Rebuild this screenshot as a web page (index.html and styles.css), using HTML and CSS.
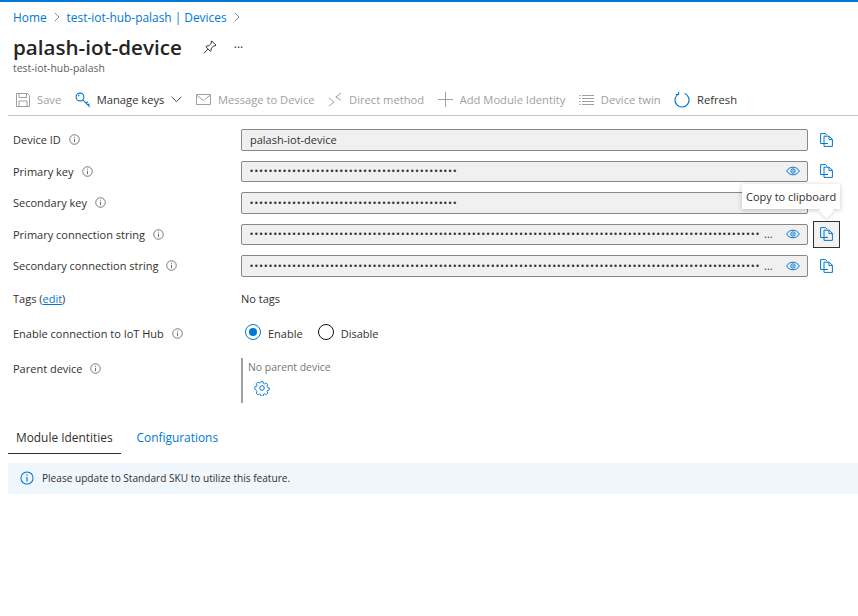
FILE: index.html
```html
<!DOCTYPE html>
<html lang="en">

<head>
    <meta charset="UTF-8">
    <meta name="viewport" content="width=device-width, initial-scale=1.0">
    <title>palash-iot-device</title>
    <link rel="stylesheet" href="styles.css">
</head>

<body>
    <svg class="icon-defs" width="0" height="0">
        <symbol id="info" viewBox="0 0 12 12">
            <circle cx="6" cy="6" r="5.2" fill="none" stroke="currentColor" stroke-width="0.9"/>
            <path d="M6 5.2V9M6 3v1" fill="none" stroke="currentColor" stroke-width="1"/>
        </symbol>
        <symbol id="copy" viewBox="0 0 13 14">
            <path d="M8 10.500H.6V.6h5l1.500 1.700" fill="none" stroke="currentColor" stroke-width="1"/>
            <path d="M4 3.200h5.300l3.100 3.100v7.100H4zM9 3.200v3.400h3.400" fill="none" stroke="currentColor" stroke-width="1"/>
        </symbol>
        <symbol id="eye" viewBox="0 0 14 10">
            <path d="M.6 5C2.200 2.500 4.400 1.200 7 1.200S11.800 2.500 13.400 5C11.800 7.500 9.600 8.800 7 8.800S2.200 7.500.6 5z" fill="none" stroke="currentColor" stroke-width="1"/>
            <circle cx="7" cy="5" r="2.200" fill="none" stroke="currentColor" stroke-width="1"/>
            <circle cx="7" cy="5" r="0.800" fill="currentColor"/>
        </symbol>
    </svg>

    <nav class="breadcrumb">
        <a href="#">Home</a>
        <svg class="crumb-sep" width="6" height="10" viewBox="0 0 6 10"><path d="M.8.800 5 5 .8 9.200" fill="none" stroke="currentColor"/></svg>
        <a href="#">test-iot-hub-palash | Devices</a>
        <svg class="crumb-sep" width="6" height="10" viewBox="0 0 6 10"><path d="M.8.800 5 5 .8 9.200" fill="none" stroke="currentColor"/></svg>
    </nav>

    <header class="page-title">
        <h1>palash-iot-device</h1>
        <svg class="pin" width="14" height="14" viewBox="0 0 14 14">
            <path d="M8.800 1 13 5.200 11.900 6 10.900 5.800 8.200 8.300 8.200 10.500 7.300 11.200 2.900 6.800 3.600 5.900 5.800 5.900 8.300 3.200 8.100 2z" fill="none" stroke="#333" stroke-width="1"/>
            <path d="M5 9.100.8 13.300" fill="none" stroke="#333" stroke-width="1"/>
        </svg>
        <span class="more">···</span>
    </header>
    <p class="subtitle">test-iot-hub-palash</p>

    <div class="toolbar">
        <span class="tool disabled">
            <svg width="14" height="14" viewBox="0 0 14 14"><path d="M.5.500h11l2 2v11H.5zM3 .500v4h7.500v-4M3 13.500v-5.500h8v5.500" fill="none" stroke="currentColor"/></svg>
            Save
        </span>
        <span class="tool">
            <svg class="blue key" width="16" height="16" viewBox="0 0 16 16"><circle cx="5" cy="5" r="3.900" fill="none" stroke="currentColor" stroke-width="1.100"/><path d="M7.800 7.800 14.800 14.800M11 11l1.800-1.300M13 13l1.500-1.200" fill="none" stroke="currentColor" stroke-width="1.100"/><circle cx="3.800" cy="3.800" r="0.800" fill="currentColor"/></svg>
            Manage keys
            <svg class="chevron" width="11" height="7" viewBox="0 0 11 7"><path d="M.6.800 5.500 5.600 10.400.800" fill="none" stroke="#444"/></svg>
        </span>
        <span class="tool disabled">
            <svg width="15" height="11" viewBox="0 0 15 11"><path d="M.5.500h14v10H.5zM.5 1 7.500 6.500 14.500 1" fill="none" stroke="currentColor"/></svg>
            Message to Device
        </span>
        <span class="tool disabled">
            <svg width="14" height="15" viewBox="0 0 14 15"><path d="M13 1 7.800 5 13 8.300M1 6l5 4.200L1 14" fill="none" stroke="currentColor"/></svg>
            Direct method
        </span>
        <span class="tool disabled">
            <svg width="15" height="15" viewBox="0 0 15 15"><path d="M7.500 0v15M0 7.500h15" fill="none" stroke="currentColor"/></svg>
            Add Module Identity
        </span>
        <span class="tool disabled">
            <svg width="15" height="10" viewBox="0 0 15 10"><path d="M3 .500h12M3 3.500h12M3 6.500h12M3 9.500h12M0 .500h1.500M0 3.500h1.500M0 6.500h1.500M0 9.500h1.500" fill="none" stroke="currentColor"/></svg>
            Device twin
        </span>
        <span class="tool">
            <svg class="blue" width="16" height="16" viewBox="0 0 16 16"><path d="M4.800 1.800A7 7 0 1 0 10.600 1.500M4.500 0v2.500H1.800" fill="none" stroke="currentColor" stroke-width="1.200"/></svg>
            Refresh
        </span>
    </div>

    <section class="fields">
        <div class="row">
            <label>Device ID <svg class="info"><use href="#info"/></svg></label>
            <div class="field"><span class="value">palash-iot-device</span></div>
            <button class="copy"><svg><use href="#copy"/></svg></button>
        </div>
        <div class="row">
            <label>Primary key <svg class="info"><use href="#info"/></svg></label>
            <div class="field"><span class="value dots">••••••••••••••••••••••••••••••••••••••••••••</span><svg class="eye"><use href="#eye"/></svg></div>
            <button class="copy"><svg><use href="#copy"/></svg></button>
        </div>
        <div class="row">
            <label>Secondary key <svg class="info"><use href="#info"/></svg></label>
            <div class="field"><span class="value dots">••••••••••••••••••••••••••••••••••••••••••••</span><svg class="eye"><use href="#eye"/></svg></div>
            <button class="copy"><svg><use href="#copy"/></svg></button>
        </div>
        <div class="row">
            <label>Primary connection string <svg class="info"><use href="#info"/></svg></label>
            <div class="field"><span class="value dots long">••••••••••••••••••••••••••••••••••••••••••••••••••••••••••••••••••••••••••••••••••••••••••••••••••••••••••••</span><span class="ellipsis">...</span><svg class="eye"><use href="#eye"/></svg></div>
            <button class="copy active"><svg><use href="#copy"/></svg></button>
            <div class="tooltip">Copy to clipboard</div>
        </div>
        <div class="row">
            <label>Secondary connection string <svg class="info"><use href="#info"/></svg></label>
            <div class="field"><span class="value dots long">••••••••••••••••••••••••••••••••••••••••••••••••••••••••••••••••••••••••••••••••••••••••••••••••••••••••••••</span><span class="ellipsis">...</span><svg class="eye"><use href="#eye"/></svg></div>
            <button class="copy"><svg><use href="#copy"/></svg></button>
        </div>
    </section>

    <div class="row-plain tags-row">
        <label>Tags (<a href="#">edit</a>)</label>
        <span>No tags</span>
    </div>

    <div class="row-plain enable-row">
        <label>Enable connection to IoT Hub <svg class="info"><use href="#info"/></svg></label>
        <div class="radios">
            <span class="radio checked"></span><span class="radio-text">Enable</span>
            <span class="radio"></span><span class="radio-text">Disable</span>
        </div>
    </div>

    <div class="row-plain parent-row">
        <label>Parent device <svg class="info"><use href="#info"/></svg></label>
        <div class="parent-box">
            <span>No parent device</span>
            <svg class="gear" width="16" height="16" viewBox="0 0 16 16">
                <path d="M6.700 1h2.600l.4 1.900 1.300.6 1.700-1 1.800 1.800-1 1.700.6 1.300 1.900.4v2.600l-1.900.4-.6 1.300 1 1.700-1.800 1.800-1.700-1-1.300.6-.4 1.900H6.700l-.4-1.900-1.300-.6-1.700 1-1.800-1.800 1-1.700-.6-1.300L0 9.300V6.700l1.900-.4.600-1.300-1-1.700 1.800-1.800 1.700 1 1.300-.6z" transform="translate(.8 .8) scale(.9)" fill="none" stroke="currentColor"/>
                <circle cx="8" cy="8" r="2.300" fill="none" stroke="currentColor"/>
            </svg>
        </div>
    </div>

    <div class="tabs">
        <span class="tab selected">Module Identities</span>
        <span class="tab">Configurations</span>
    </div>

    <div class="banner">
        <svg class="banner-icon"><use href="#info"/></svg>
        Please update to Standard SKU to utilize this feature.
    </div>
</body>

</html>
```

FILE: styles.css
```css
html {
    overflow: hidden;
}

body {
    font-family: "Open Sans", "Noto Sans", sans-serif;
    font-size: 11px;
    color: #323130;
    background-color: #fff;
    margin: 0;
    padding: 0;
    border-top: 2px solid #0078d4;
    height: 614px;
}

.icon-defs {
    display: block;
    height: 0;
}

a {
    color: #0078d4;
    text-decoration: none;
}

.breadcrumb {
    display: flex;
    align-items: center;
    gap: 7px;
    height: 30px;
    padding-left: 13px;
    font-size: 11.900px;
}

.crumb-sep {
    color: #8a8886;
}

.page-title {
    display: flex;
    align-items: center;
    height: 31px;
    padding-left: 13px;
}

h1 {
    margin: -2px 0 0;
    font-size: 20.600px;
    font-weight: 600;
    color: #252423;
}

.pin {
    margin: -2px 0 0 21px;
}

.more {
    margin-left: 17px;
    font-size: 12px;
}

.subtitle {
    margin: -2px 0 0;
    padding-left: 13px;
    font-size: 10.400px;
    line-height: 14px;
    color: #605e5c;
}

.toolbar {
    display: flex;
    align-items: center;
    gap: 13.500px;
    height: 31px;
    margin: 9px 0 0 8px;
    padding-left: 8px;
    border-bottom: 1px solid #c8c6c4;
}

.tool {
    display: flex;
    align-items: center;
    gap: 7px;
    font-size: 11.200px;
    white-space: nowrap;
}

.tool.disabled {
    color: #a19f9d;
}

.tool .blue {
    color: #0078d4;
}

.tool .key {
    margin-right: -1px;
}

.fields {
    margin-top: 8px;
}

.row {
    position: relative;
    display: flex;
    align-items: center;
    height: 31.500px;
    padding-left: 13px;
}

.row label {
    display: flex;
    align-items: center;
    gap: 8px;
    width: 228px;
    flex-shrink: 0;
}

.row-plain label {
    display: block;
    width: 228px;
    flex-shrink: 0;
}

.info {
    width: 11px;
    height: 11px;
    color: #605e5c;
    vertical-align: -1px;
    margin-left: 5px;
}

.row label .info {
    margin-left: 0;
}

.field {
    display: flex;
    align-items: center;
    width: 567px;
    height: 21.500px;
    padding: 0 8px;
    box-sizing: border-box;
    background-color: #f0f0f0;
    border: 1px solid #8a8886;
    border-radius: 2px;
    overflow: hidden;
}

.value {
    flex: 1;
    white-space: nowrap;
    overflow: hidden;
}

.dots {
    font-family: "Liberation Sans", sans-serif;
    font-size: 8.600px;
    letter-spacing: 1.720px;
}

.dots.long {
    flex: none;
    width: 511px;
}

.ellipsis {
    margin-left: 3px;
    flex: 1;
    line-height: 14px;
}

.eye {
    width: 14px;
    height: 10px;
    color: #0078d4;
    flex-shrink: 0;
    margin-right: -1px;
}

.copy {
    display: flex;
    align-items: center;
    justify-content: center;
    width: 27px;
    height: 27px;
    margin-left: 5px;
    padding: 0;
    background: none;
    border: 1px solid transparent;
    color: #0078d4;
}

.copy svg {
    width: 13px;
    height: 14px;
}

.copy.active {
    background-color: #f3f2f1;
    border-color: #323130;
}

.tooltip {
    position: absolute;
    z-index: 2;
    left: 742px;
    top: -35px;
    padding: 0 4px;
    line-height: 25px;
    background-color: #fff;
    box-shadow: 0 1px 5px rgba(0, 0, 0, 0.22);
    white-space: nowrap;
}

.tooltip::after {
    content: "";
    position: absolute;
    left: 79px;
    bottom: -7.500px;
    width: 11px;
    height: 11px;
    background-color: #fff;
    transform: rotate(45deg);
    box-shadow: 2px 2px 3px rgba(0, 0, 0, 0.08);
}

.tags-row a {
    text-decoration: underline;
}

.row-plain {
    display: flex;
    padding-left: 13px;
}

.tags-row {
    margin-top: 8px;
    align-items: center;
    height: 18px;
}

.enable-row {
    margin-top: 14px;
    align-items: center;
    height: 24px;
}

.radios {
    display: flex;
    align-items: center;
    margin-left: 4px;
}

.radio {
    width: 14px;
    height: 14px;
    border: 1px solid #111;
    border-radius: 50%;
    position: relative;
    margin-top: -3px;
}

.radio.checked {
    border-color: #0078d4;
}

.radio.checked::after {
    content: "";
    position: absolute;
    left: 3px;
    top: 3px;
    width: 8px;
    height: 8px;
    border-radius: 50%;
    background-color: #0078d4;
}

.radio-text {
    margin: 0 15px 0 7px;
}

.parent-row {
    margin-top: 12px;
}

.parent-row label {
    margin-top: 3px;
}

.parent-box {
    display: flex;
    flex-direction: column;
    height: 43px;
    padding: 2px 0 0 5px;
    border-left: 2px solid #a19f9d;
    font-size: 10.400px;
    color: #797775;
}

.gear {
    color: #0078d4;
    margin: 6px 0 0 6px;
}

.tabs {
    display: flex;
    margin: 22px 0 0 8px;
}

.tab {
    height: 29px;
    line-height: 24px;
    padding: 0 8px;
    font-size: 11.900px;
    color: #0078d4;
    box-sizing: border-box;
    margin-right: 8px;
}

.tab.selected {
    color: #323130;
    border-bottom: 1px solid #323130;
}

.banner {
    display: flex;
    align-items: center;
    gap: 8px;
    margin: 9px 0 0 8px;
    height: 31px;
    padding-left: 12px;
    font-size: 10.100px;
    background-color: #eff6fc;
}

.banner-icon {
    width: 14px;
    height: 14px;
    color: #0078d4;
}
```
